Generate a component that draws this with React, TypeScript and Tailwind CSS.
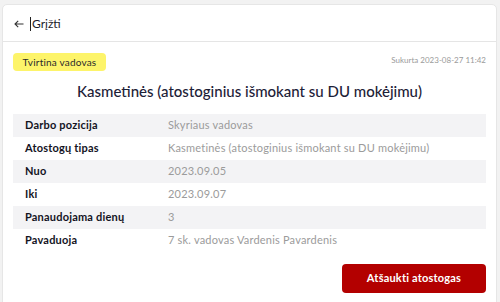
const rows = [
  { label: 'Darbo pozicija', value: 'Skyriaus vadovas' },
  { label: 'Atostogų tipas', value: 'Kasmetinės (atostoginius išmokant su DU mokėjimu)' },
  { label: 'Nuo', value: '2023.09.05' },
  { label: 'Iki', value: '2023.09.07' },
  { label: 'Panaudojama dienų', value: '3' },
  { label: 'Pavaduoja', value: '7 sk. vadovas Vardenis Pavardenis' },
]

export default function App() {
  return (
    <div className="min-h-[302px] h-[302px] overflow-hidden bg-[#f2f2f2] pt-[4px] pl-[2px] pr-[3px] font-['Lato','Noto_Sans',sans-serif]">
      <div className="bg-white rounded-[5px] border border-[#e6e6e6] h-[320px]">
        <div className="h-[37px] flex items-center pl-[11px] pt-px border-b border-[#e5e5e5]">
          <svg width="10" height="8" viewBox="0 0 10 8" className="mr-[6px]" fill="none" stroke="#333" strokeWidth="1.1">
            <path d="M9.5 4H1M4.2 0.8L1 4l3.2 3.2" />
          </svg>
          <span className="w-px h-[14px] bg-[#222] mr-px" />
          <span className="text-[12px] text-[#1c1c2a]">Grįžti</span>
        </div>

        <div className="px-[10px] pt-[11px]">
          <div className="flex items-start justify-between">
            <span className="h-[18px] w-[93px] rounded-[4px] bg-[#fdf46a] flex items-center justify-center text-[10px] tracking-[0.2px] text-[#2a2a2a]">
              Tvirtina vadovas
            </span>
            <span className="text-[8px] text-[#9a9a9a] mt-[1px]">Sukurta 2023-08-27 11:42</span>
          </div>

          <h1 className="mt-[9px] text-center text-[15px] font-medium text-[#1d2137] leading-[22px]">
            Kasmetinės (atostoginius išmokant su DU mokėjimu)
          </h1>

          <div className="mt-[12px]">
            {rows.map((r, i) => (
              <div
                key={r.label}
                className={`h-[23px] flex items-center text-[11px] ${i % 2 === 0 ? 'bg-[#f3f3f5]' : 'bg-white'}`}
              >
                <span className="w-[155px] pl-[12px] font-bold text-[#14141f] tracking-[0.2px]">{r.label}</span>
                <span className="text-[#9b9b9b] tracking-[0.2px]">{r.value}</span>
              </div>
            ))}
          </div>

          <div className="flex justify-end mt-[12px]">
            <button className="h-[29px] w-[144px] rounded-[4px] bg-[#b30000] text-white text-[11px] font-bold tracking-[0.2px]">
              Atšaukti atostogas
            </button>
          </div>
        </div>
      </div>
    </div>
  )
}
